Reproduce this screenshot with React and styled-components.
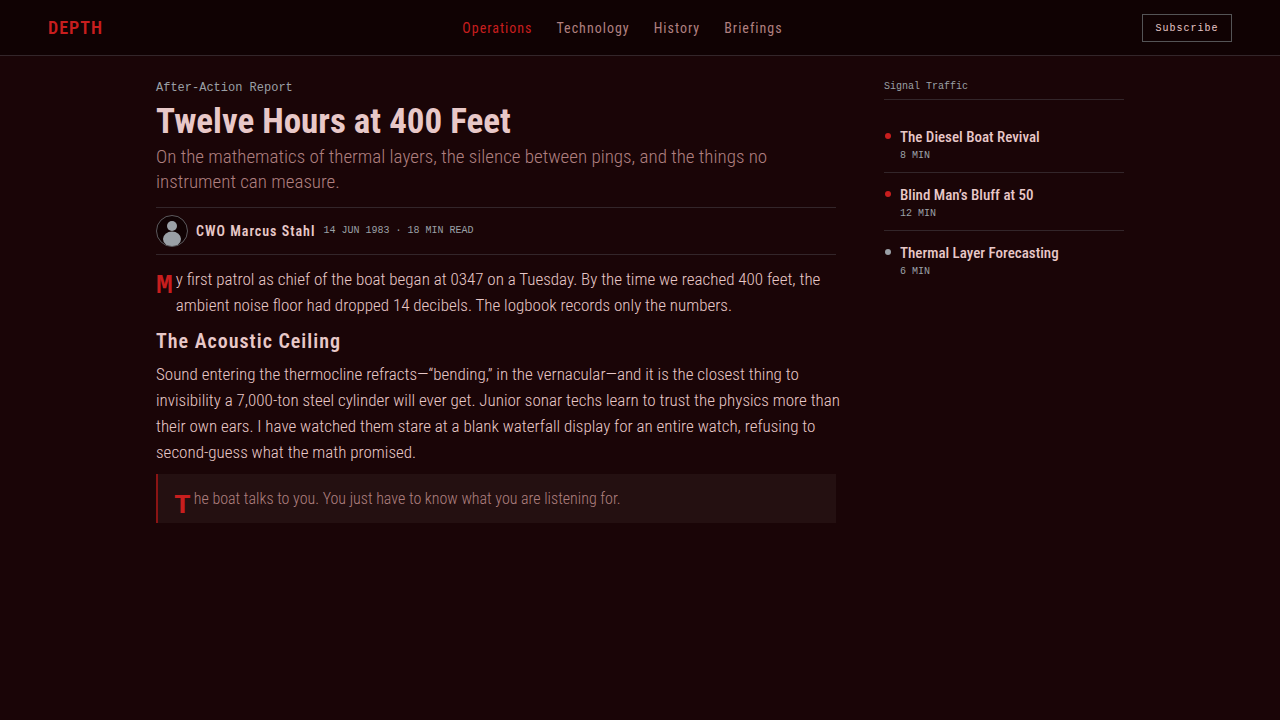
import React from "react";
import styled, { createGlobalStyle } from "styled-components";

const sans = `"Roboto Condensed", Roboto, sans-serif`;
const mono = `"Liberation Mono", monospace`;

const GlobalStyle = createGlobalStyle`
  * {
    box-sizing: border-box;
  }

  body {
    margin: 0;
    min-height: 100vh;
    background: #1a0507;
    color: #e8c8c8;
    font-family: ${sans};
  }

  h1,
  h2,
  p,
  ul {
    margin: 0;
    padding: 0;
  }
`;

const Header = styled.header`
  display: flex;
  align-items: center;
  justify-content: space-between;
  height: 56px;
  padding: 0 48px;
  background: #100203;
  border-bottom: 1px solid #33262a;
`;

const Logo = styled.a`
  color: #c81e1e;
  font-size: 18px;
  font-weight: 600;
  letter-spacing: 1px;
  text-decoration: none;
`;

const Nav = styled.nav`
  display: flex;
  gap: 24px;
`;

const NavLink = styled.a`
  color: ${(props) => (props.$active ? "#c81e1e" : "#b08080")};
  font-size: 14px;
  line-height: 20px;
  letter-spacing: 1px;
  text-decoration: none;
`;

const SubscribeButton = styled.button`
  min-width: 90px;
  height: 28px;
  padding: 2px 12px 0;
  background: transparent;
  border: 1px solid #545456;
  color: #e8c8c8;
  font-family: ${mono};
  font-size: 10px;
  letter-spacing: 1px;
  cursor: pointer;
`;

const Page = styled.main`
  display: grid;
  grid-template-columns: minmax(0, 680px) 240px;
  justify-content: center;
  align-items: start;
  gap: 48px;
  padding: 24px 48px;
`;

const Kicker = styled.p`
  color: #9aa0a6;
  font-family: ${mono};
  font-size: 12px;
  line-height: 16px;
`;

const Title = styled.h1`
  margin-top: 4px;
  font-size: 35px;
  font-weight: 700;
  line-height: 44px;
`;

const Deck = styled.p`
  color: #b08080;
  font-size: 19px;
  font-weight: 300;
  line-height: 25px;
`;

const Byline = styled.div`
  display: flex;
  align-items: center;
  gap: 8px;
  margin: 13px 0 11px;
  padding: 7px 0;
  border-top: 1px solid #33262a;
  border-bottom: 1px solid #33262a;
`;

const Author = styled.span`
  font-size: 14px;
  font-weight: 600;
  letter-spacing: 1px;
`;

const Meta = styled.span`
  color: #9aa0a6;
  font-family: ${mono};
  font-size: 10px;
  line-height: 18px;
  text-transform: uppercase;
`;

const Paragraph = styled.p`
  margin-right: -8px;
  font-size: 17px;
  font-weight: 350;
  line-height: 26px;

  &:first-of-type::first-letter {
    float: left;
    margin: 6px 3px 0 0;
    color: #c81e1e;
    font-family: ${mono};
    font-size: 28px;
    font-weight: 700;
    line-height: 28px;
  }
`;

const SectionTitle = styled.h2`
  margin: 10px 0 6px;
  font-size: 20px;
  font-weight: 600;
  line-height: 27px;
  letter-spacing: 1px;
`;

const PullQuote = styled.blockquote`
  margin: 9px 0 0;
  padding: 12px 16px;
  background: #241011;
  border-left: 2px solid #8b1414;
`;

const QuoteText = styled(Paragraph)`
  margin-right: 0;
  color: #b08080;
  font-size: 16px;
  font-weight: 300;
  line-height: 25px;
`;

const SideTitle = styled.h2`
  padding-bottom: 5px;
  border-bottom: 1px solid #33262a;
  color: #9aa0a6;
  font-family: ${mono};
  font-size: 10px;
  font-weight: 400;
  line-height: 14px;
`;

const SideList = styled.ul`
  margin-top: 15px;
  list-style: none;
`;

const SideItem = styled.li`
  display: flex;
  gap: 8px;
  padding: 12px 0 7px;

  & + & {
    border-top: 1px solid #33262a;
  }

  svg {
    flex: none;
    margin-top: 5px;
  }
`;

const SideText = styled.div`
  display: flex;
  flex-direction: column;
`;

const SideLink = styled.a`
  color: #e8c8c8;
  font-size: 15px;
  font-weight: 500;
  line-height: 20px;
  text-decoration: none;
`;

const navLinks = ["Operations", "Technology", "History", "Briefings"];

const traffic = [
  { title: "The Diesel Boat Revival", time: "8 min", color: "#c81e1e" },
  { title: "Blind Man’s Bluff at 50", time: "12 min", color: "#c81e1e" },
  { title: "Thermal Layer Forecasting", time: "6 min", color: "#9aa0a6" },
];

const Avatar = () => (
  <svg width="32" height="32" viewBox="0 0 32 32" aria-hidden="true">
    <defs>
      <clipPath id="avatar">
        <circle cx="16" cy="16" r="15.5" />
      </clipPath>
    </defs>
    <circle cx="16" cy="16" r="15.5" fill="#100203" />
    <g fill="#9aa0a6" clipPath="url(#avatar)">
      <circle cx="16" cy="11" r="5" />
      <ellipse cx="16" cy="24" rx="9" ry="7.5" />
    </g>
    <circle cx="16" cy="16" r="15.5" fill="none" stroke="#5c5a5e" />
  </svg>
);

export default function App() {
  return (
    <>
      <GlobalStyle />
      <Header>
        <Logo href="#">DEPTH</Logo>
        <Nav>
          {navLinks.map((label, i) => (
            <NavLink key={label} href="#" $active={i === 0}>
              {label}
            </NavLink>
          ))}
        </Nav>
        <SubscribeButton type="button">Subscribe</SubscribeButton>
      </Header>

      <Page>
        <article>
          <header>
            <Kicker>After-Action Report</Kicker>
            <Title>Twelve Hours at 400 Feet</Title>
            <Deck>
              On the mathematics of thermal layers, the silence between pings,
              and the things no instrument can measure.
            </Deck>
            <Byline>
              <Avatar />
              <Author>CWO Marcus Stahl</Author>
              <Meta>14 Jun 1983 · 18 min read</Meta>
            </Byline>
          </header>
          <Paragraph>
            My first patrol as chief of the boat began at 0347 on a Tuesday. By
            the time we reached 400 feet, the ambient noise floor had dropped 14
            decibels. The logbook records only the numbers.
          </Paragraph>
          <SectionTitle>The Acoustic Ceiling</SectionTitle>
          <Paragraph>
            Sound entering the thermocline refracts—“bending,” in the
            vernacular—and it is the closest thing to invisibility a 7,000-ton
            steel cylinder will ever get. Junior sonar techs learn to trust the
            physics more than their own ears. I have watched them stare at a
            blank waterfall display for an entire watch, refusing to
            second-guess what the math promised.
          </Paragraph>
          <PullQuote>
            <QuoteText>
              The boat talks to you. You just have to know what you are
              listening for.
            </QuoteText>
          </PullQuote>
        </article>

        <aside>
          <SideTitle>Signal Traffic</SideTitle>
          <SideList>
            {traffic.map((item) => (
              <SideItem key={item.title}>
                <svg width="8" height="8" viewBox="0 0 8 8" aria-hidden="true">
                  <circle cx="4" cy="4" r="3" fill={item.color} />
                </svg>
                <SideText>
                  <SideLink href="#">{item.title}</SideLink>
                  <Meta>{item.time}</Meta>
                </SideText>
              </SideItem>
            ))}
          </SideList>
        </aside>
      </Page>
    </>
  );
}
